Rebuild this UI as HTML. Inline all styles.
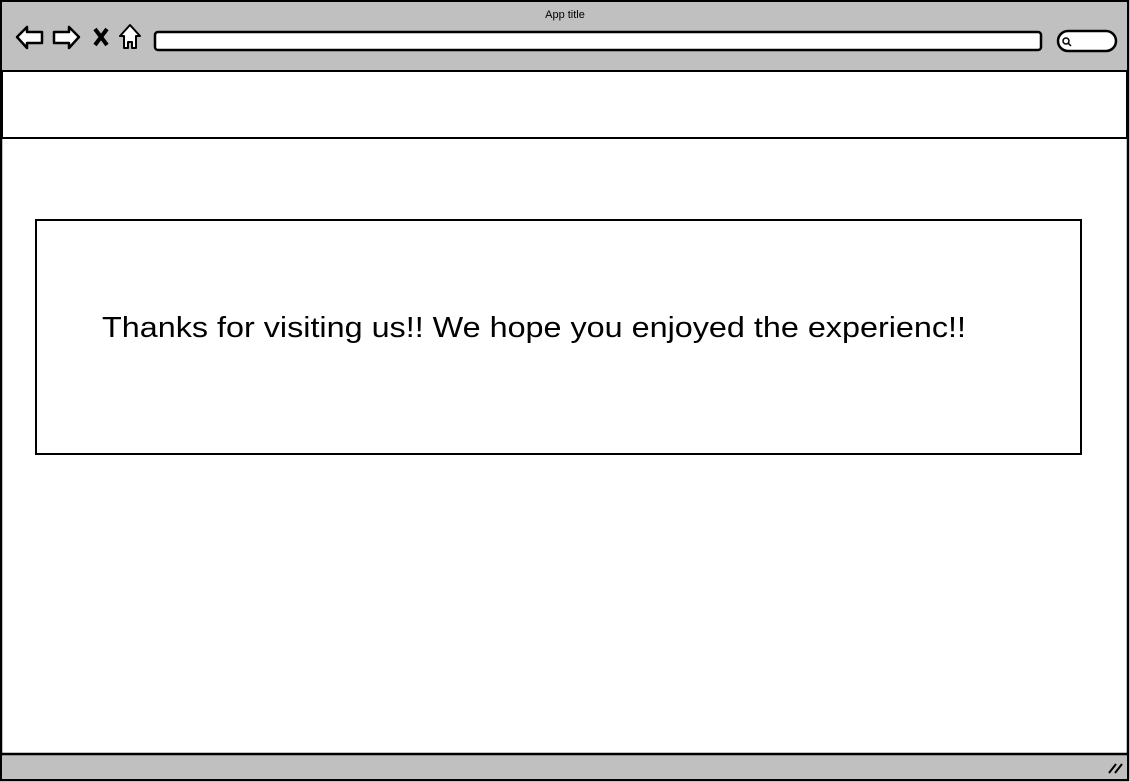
<!DOCTYPE html>
<html><head><style>
body{margin:0;width:1130px;height:782px;overflow:hidden;background:#fff;font-family:"Liberation Sans",sans-serif;}
</style></head><body>
<svg width="1130" height="782" style="position:absolute;left:0;top:0">
<rect x="1" y="1" width="1127" height="779" fill="#fff" stroke="#000" stroke-width="2.5"/>
<rect x="2" y="2" width="1125" height="68" fill="#c0c0c0"/>
<text x="565" y="18" font-size="11" text-anchor="middle" font-family="Liberation Sans">App title</text>
<path d="M17 37 L27 27 L27 32 L42 32 L42 43 L27 43 L27 48 Z" fill="#fff" stroke="#000" stroke-width="2.5" stroke-linejoin="round"/>
<path d="M79 37 L69 27 L69 32 L54 32 L54 43 L69 43 L69 48 Z" fill="#fff" stroke="#000" stroke-width="2.5" stroke-linejoin="round"/>
<path d="M95 29 L107 45 M107 29 L95 45" stroke="#000" stroke-width="4"/>
<path d="M130 25 L120 36 L124 36 L124 48 L128 48 L128 42 L132 42 L132 48 L136 48 L136 36 L140 36 Z" fill="#fff" stroke="#000" stroke-width="2" stroke-linejoin="round"/>
<rect x="155" y="32" width="886" height="18" rx="3" fill="#fff" stroke="#000" stroke-width="2.5"/>
<rect x="1058" y="31" width="58" height="20" rx="10" fill="#fff" stroke="#000" stroke-width="2.5"/>
<circle cx="1066" cy="41" r="3" fill="none" stroke="#000" stroke-width="1.5"/>
<line x1="1068" y1="43" x2="1071" y2="46" stroke="#000" stroke-width="1.5"/>
<rect x="2" y="71" width="1125" height="67" fill="#fff" stroke="#000" stroke-width="2"/>
<rect x="36" y="220" width="1045" height="234" fill="#fff" stroke="#000" stroke-width="2"/>
<text x="102" y="337" font-size="29" font-family="Liberation Sans" textLength="864" lengthAdjust="spacingAndGlyphs">Thanks for visiting us!! We hope you enjoyed the experienc!!</text>
<rect x="2" y="754" width="1125" height="25" fill="#c0c0c0"/>
<line x1="1" y1="754" x2="1128" y2="754" stroke="#000" stroke-width="2.5"/>
<path d="M1109 773 L1116 764 M1115 773 L1122 764" stroke="#000" stroke-width="2"/>
</svg>
</body></html>
